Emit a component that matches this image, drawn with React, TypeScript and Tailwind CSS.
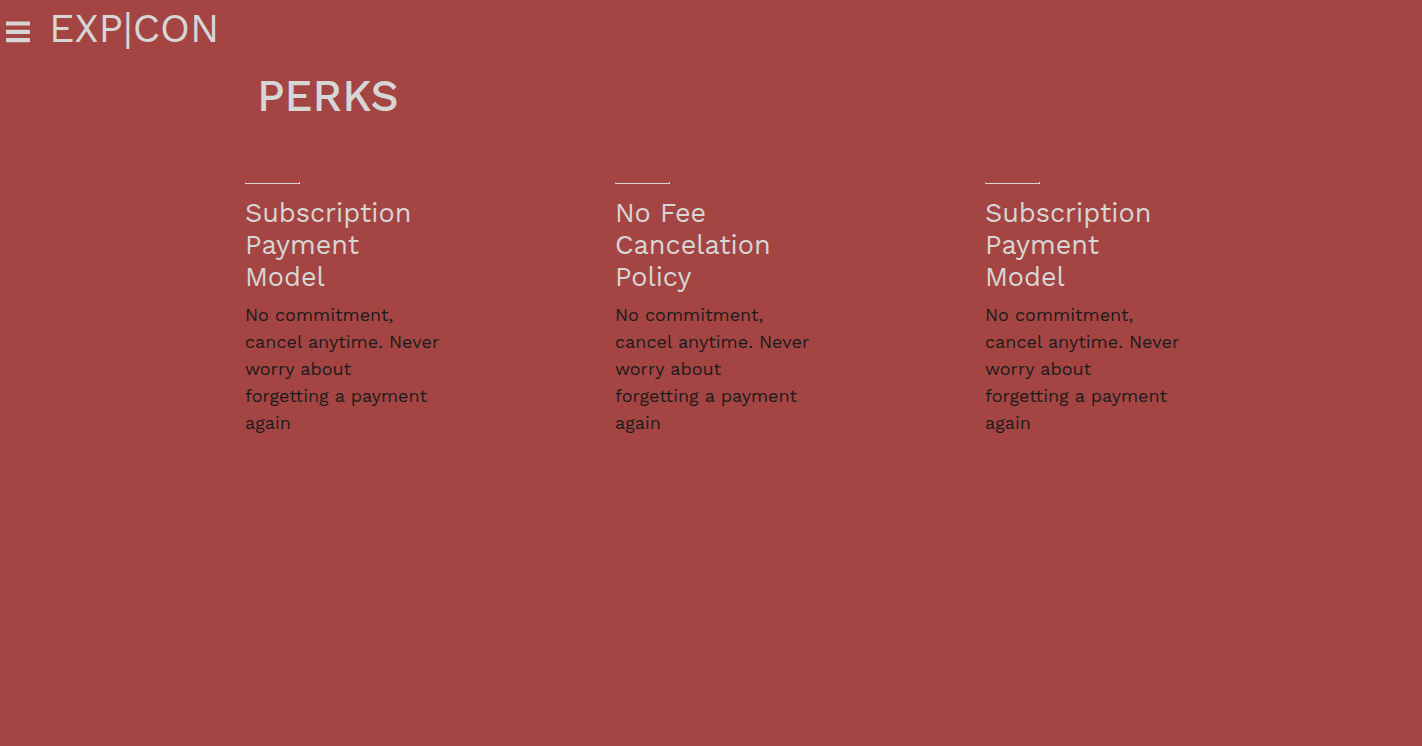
const perks = [
  { id: "subscription", title: "Subscription Payment Model" },
  { id: "cancelation", title: "No Fee Cancelation Policy" },
  { id: "payment", title: "Subscription Payment Model" },
];

function MenuIcon() {
  return (
    <svg viewBox="0 0 24 22" className="h-[22px] w-6 fill-current" aria-hidden="true">
      <rect x="0" y="0.4" width="24" height="4.2" rx="0.4" />
      <rect x="0" y="8.8" width="24" height="4.2" rx="0.4" />
      <rect x="0" y="17" width="24" height="4.2" rx="0.4" />
    </svg>
  );
}

function Perk({ title }: { title: string }) {
  return (
    <article className="pr-[86px] pl-[89px]">
      <hr className="h-[2px] w-[55px] border-t-0 border-r border-b border-l border-[#d6d6d6] border-l-[#b08a88]" />
      <h2 className="mt-[13px] text-[27px] leading-8 text-[#d6d6d6]">{title}</h2>
      <p className="mt-2 text-[18px] leading-[27px] text-[#1b1b1b]">
        No commitment, cancel anytime. Never worry about forgetting a payment again
      </p>
    </article>
  );
}

export default function App() {
  return (
    <div className="min-h-screen bg-[#a44543] font-['Work_Sans','Open_Sans',sans-serif]">
      <header className="flex h-16 items-start text-[#d6d6d6]">
        <button type="button" aria-label="Open menu" className="mt-[21px] ml-[6px]">
          <MenuIcon />
        </button>
        <a href="#" className="mt-1 ml-[19px] text-[40px] leading-[50px]">EXP|CON</a>
      </header>
      <main className="mx-auto max-w-[1110px]">
        <h1 className="ml-[101px] text-[44px] leading-[64px] font-medium text-[#d6d6d6]">PERKS</h1>
        <section className="mt-[54px] grid grid-cols-3">
          {perks.map((p) => (
            <Perk key={p.id} title={p.title} />
          ))}
        </section>
      </main>
    </div>
  );
}
